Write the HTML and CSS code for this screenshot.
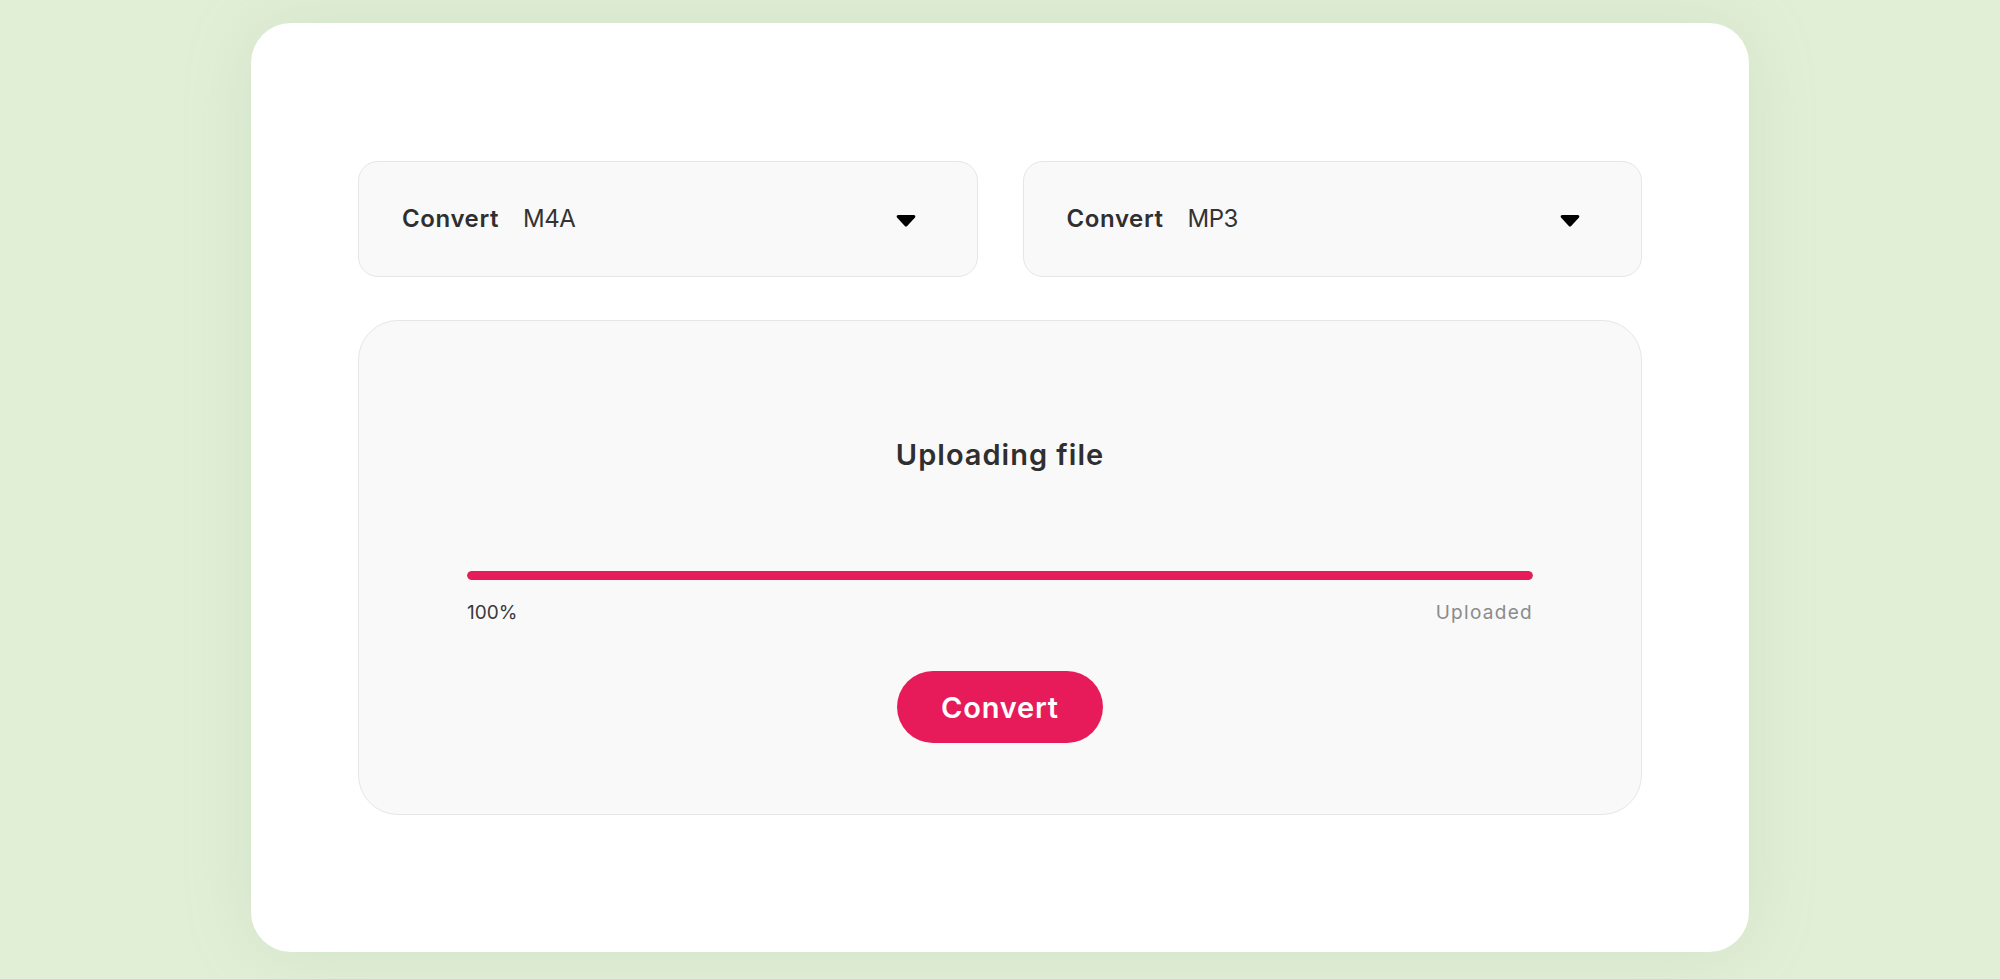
FILE: index.html
```html
<!DOCTYPE html>
<html lang="en">
<head>
<meta charset="utf-8">
<title>Convert M4A to MP3</title>
<link rel="stylesheet" href="styles.css">
</head>
<body>
<main class="card">
  <div class="selects">
    <div class="select">
      <span class="select-label">Convert</span>
      <span class="select-value">M4A</span>
      <svg class="caret" width="20" height="13" viewBox="0 0 20 13"><path d="M2.2 1h15.6c1.3 0 2 1.4 1.2 2.4l-7.8 8.6c-.7.7-1.7.7-2.4 0L1 3.4C.2 2.4.9 1 2.2 1z" fill="#000"/></svg>
    </div>
    <div class="select">
      <span class="select-label">Convert</span>
      <span class="select-value">MP3</span>
      <svg class="caret" width="20" height="13" viewBox="0 0 20 13"><path d="M2.2 1h15.6c1.3 0 2 1.4 1.2 2.4l-7.8 8.6c-.7.7-1.7.7-2.4 0L1 3.4C.2 2.4.9 1 2.2 1z" fill="#000"/></svg>
    </div>
  </div>
  <section class="panel">
    <h1 class="title">Uploading file</h1>
    <div class="progress"><div class="progress-fill" style="width:100%"></div></div>
    <div class="progress-labels">
      <span class="percent">100%</span>
      <span class="status">Uploaded</span>
    </div>
    <button class="convert-btn">Convert</button>
  </section>
</main>
</body>
</html>
```

FILE: styles.css
```css
* { box-sizing: border-box; }
html, body {
  margin: 0;
  padding: 0;
}
body {
  background: #e1efd7;
  font-family: Inter, "Open Sans", sans-serif;
  color: #2f2f2f;
  padding-top: 23px;
  height: 979px;
  overflow: hidden;
}
.card {
  width: 1498px;
  height: 929px;
  margin: 0 auto;
  background: #fff;
  border-radius: 40px;
  padding: 138px 107px;
  box-shadow: 0 0 70px rgba(140, 170, 120, 0.18);
}
.selects {
  display: flex;
  gap: 45px;
}
.select {
  flex: 1;
  height: 116px;
  display: flex;
  align-items: center;
  padding: 0 61px 0 43px;
  background: #f9f9f9;
  border: 1px solid #e6e6e6;
  border-radius: 20px;
}
.select-label {
  font-size: 24px;
  font-weight: 600;
  line-height: 30px;
  color: #2f2f2f;
  letter-spacing: 0.6px;
}
.select-value {
  font-size: 24px;
  font-weight: 400;
  line-height: 30px;
  margin-left: 24px;
  color: #333;
  letter-spacing: -0.5px;
}
.caret {
  margin-left: auto;
  margin-top: 2px;
}
.panel {
  margin-top: 43px;
  height: 495px;
  background: #f9f9f9;
  border: 1px solid #e6e6e6;
  border-radius: 40px;
  padding: 116px 108px 0 108px;
  display: flex;
  flex-direction: column;
  align-items: center;
}
.title {
  margin: 0;
  font-size: 29px;
  line-height: 36px;
  font-weight: 600;
  color: #2f2f2f;
  letter-spacing: 1px;
}
.progress {
  margin-top: 98px;
  width: 100%;
  height: 9px;
  border-radius: 5px;
  background: #ececec;
  overflow: hidden;
}
.progress-fill {
  height: 100%;
  background: #e61c5b;
  border-radius: 5px;
}
.progress-labels {
  margin-top: 21px;
  width: 100%;
  display: flex;
  justify-content: space-between;
  font-size: 19px;
  line-height: 24px;
}
.percent { color: #3a3a3a; }
.status { color: #8b8b8b; letter-spacing: 1.3px; }
.convert-btn {
  margin-top: 46px;
  width: 206px;
  height: 72px;
  border: none;
  border-radius: 36px;
  background: #e81b5a;
  color: #fff;
  font-family: Inter, "Open Sans", sans-serif;
  font-size: 29px;
  font-weight: 600;
  letter-spacing: 0.8px;
  padding: 0;
  cursor: pointer;
}
```
